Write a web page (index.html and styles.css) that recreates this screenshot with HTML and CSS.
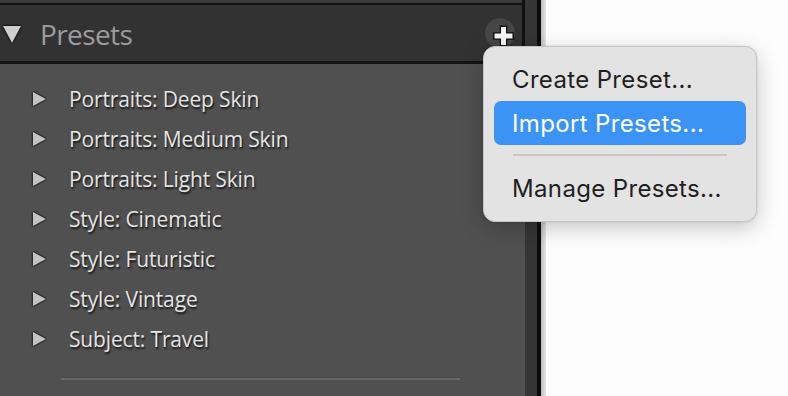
FILE: index.html
```html
<!DOCTYPE html>
<html>
<head>
<meta charset="utf-8">
<link rel="stylesheet" href="styles.css">
</head>
<body>
<div class="screen">
  <div class="panel">
    <div class="topstrip"></div>
    <div class="header">
      <span class="tri-down"></span>
      <span class="title">Presets</span>
      <span class="addbtn">
        <svg width="30" height="30" viewBox="0 0 30 30">
          <path d="M18.5 3.5 V24.5 M8 14 H29" stroke="#111" stroke-width="7.5" stroke-linecap="butt" fill="none"/>
          <path d="M18.5 5 V23 M9.5 14 H27.5" stroke="#f4f4f4" stroke-width="5" fill="none"/>
        </svg>
        <span class="caret"></span>
      </span>
    </div>
    <div class="list">
      <div class="row"><span class="tri-right"></span><span class="label">Portraits: Deep Skin</span></div>
      <div class="row"><span class="tri-right"></span><span class="label">Portraits: Medium Skin</span></div>
      <div class="row"><span class="tri-right"></span><span class="label">Portraits: Light Skin</span></div>
      <div class="row"><span class="tri-right"></span><span class="label">Style: Cinematic</span></div>
      <div class="row"><span class="tri-right"></span><span class="label">Style: Futuristic</span></div>
      <div class="row"><span class="tri-right"></span><span class="label">Style: Vintage</span></div>
      <div class="row"><span class="tri-right"></span><span class="label">Subject: Travel</span></div>
      <div class="rule"></div>
    </div>
  </div>
  <div class="edge-dark"></div>
  <div class="edge-black"></div>
  <div class="edge-light"></div>
  <div class="white"></div>

  <div class="menu">
    <div class="item">Create Preset...</div>
    <div class="item active">Import Presets...</div>
    <div class="sep"></div>
    <div class="item">Manage Presets...</div>
  </div>
</div>
</body>
</html>
```

FILE: styles.css
```css
html, body {
  margin: 0;
  padding: 0;
  background: #ffffff;
}
.screen {
  position: relative;
  width: 788px;
  height: 396px;
  overflow: hidden;
  display: flex;
}
.panel {
  width: 525px;
  height: 396px;
  background: #505050;
  display: flex;
  flex-direction: column;
}
.topstrip {
  height: 3px;
  background: #3a3a3a;
  border-bottom: 2px solid #111;
  border-right: 3px solid #111;
}
.header {
  height: 56px;
  background: #323232;
  border-bottom: 3px solid #141414;
  border-right: 3px solid #111;
  display: flex;
  align-items: center;
  position: relative;
}
.tri-down {
  width: 0;
  height: 0;
  margin-left: 3px;
  margin-top: 2px;
  border-left: 9px solid transparent;
  border-right: 9px solid transparent;
  border-top: 17px solid #cfcfcf;
  filter: drop-shadow(0 0 1px #000) drop-shadow(0 0 0.5px #000);
}
.title {
  margin-left: 19px;
  font-family: "Open Sans", sans-serif;
  font-size: 28px;
  letter-spacing: -0.6px;
  color: #9b9b9b;
  line-height: 1;
  margin-top: 1px;
}
.addbtn {
  position: absolute;
  left: 485px;
  top: 13px;
  width: 30px;
  height: 30px;
  border-radius: 50%;
  background: #464646;
}
.addbtn svg {
  position: absolute;
  left: 0;
  top: 4px;
  overflow: visible;
}
.caret {
  position: absolute;
  left: 27px;
  top: 29px;
  width: 0;
  height: 0;
  border-left: 4px solid transparent;
  border-right: 4px solid transparent;
  border-top: 4px solid #e0e0e0;
}
.list {
  flex: 1;
  display: flex;
  flex-direction: column;
  padding-top: 15px;
}
.row {
  height: 40px;
  display: flex;
  align-items: center;
}
.tri-right {
  width: 0;
  height: 0;
  margin-left: 33px;
  border-top: 7px solid transparent;
  border-bottom: 7px solid transparent;
  border-left: 13px solid #c4c4c4;
  filter: drop-shadow(0 0 1px #111) drop-shadow(0 0 0.5px #111);
}
.label {
  margin-left: 23px;
  font-family: "Open Sans", sans-serif;
  font-size: 21px;
  letter-spacing: -0.15px;
  color: #e4e4e4;
  text-shadow: 1px 2px 2px rgba(0,0,0,0.75);
  line-height: 1;
}
.rule {
  margin-top: 18px;
  margin-left: 61px;
  width: 399px;
  height: 3px;
  background: #686868;
  border-top: 1px solid #474747;
  box-sizing: border-box;
}
.edge-dark {
  width: 12px;
  background: #353535;
}
.edge-black {
  width: 4px;
  background: #0c0c0c;
}
.edge-light {
  width: 5px;
  background: linear-gradient(to right, #bdbdbd, #e6e6e6);
}
.white {
  flex: 1;
  background: #fdfdfd;
}
.menu {
  position: absolute;
  left: 483px;
  top: 46px;
  width: 274px;
  height: 176px;
  box-sizing: border-box;
  padding: 11px 10px 11px 10px;
  background: #e4e3e4;
  border: 1px solid #c6c6c6;
  border-radius: 12px;
  box-shadow: 0 6px 22px rgba(0,0,0,0.22), 0 0 2px rgba(0,0,0,0.15);
  display: flex;
  flex-direction: column;
}
.item {
  height: 44px;
  display: flex;
  align-items: center;
  padding-left: 18px;
  font-family: "Inter", sans-serif;
  font-size: 24px;
  color: #1f1f1f;
  border-radius: 7px;
  letter-spacing: 0.35px;
}
.item.active {
  background: #3b94f5;
  color: #ffffff;
}
.sep {
  height: 2px;
  margin: 9px 19px 11px 19px;
  background: #c7c7c7;
}
```
